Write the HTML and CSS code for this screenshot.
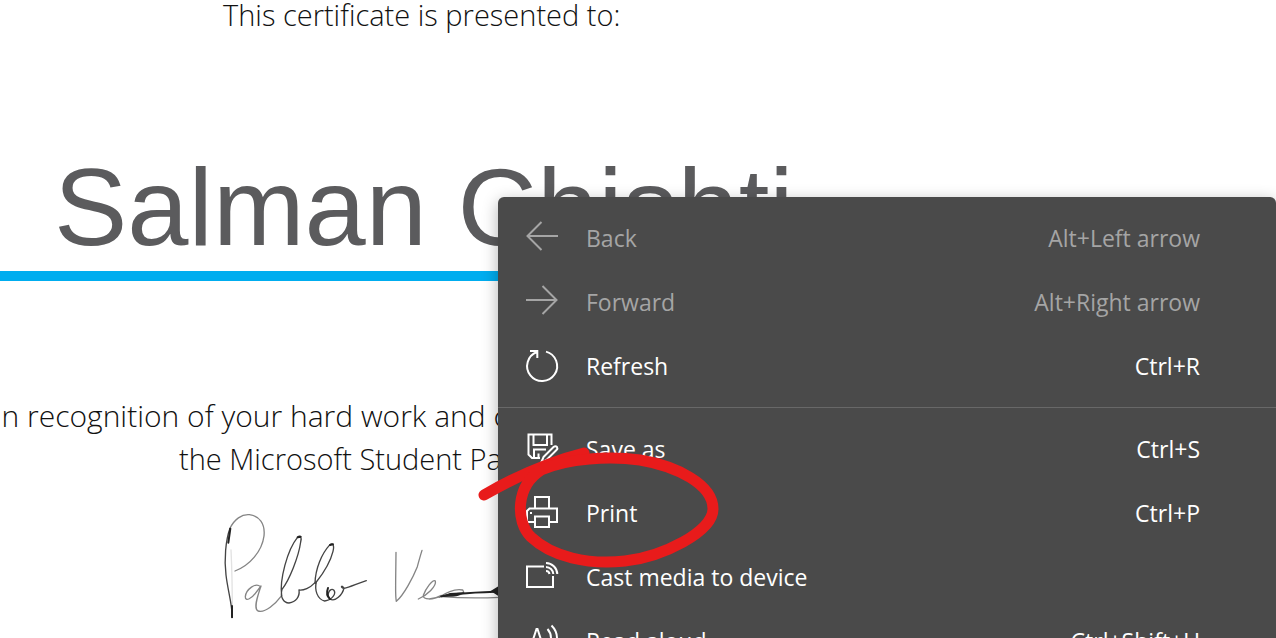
FILE: index.html
```html
<!DOCTYPE html>
<html lang="en">
<head>
<meta charset="utf-8">
<title>Certificate</title>
<link rel="stylesheet" href="styles.css">
</head>
<body>
<main class="certificate">
  <p class="intro">This certificate is presented to:</p>
  <h1 class="name">Salman Chishti</h1>
  <hr class="rule">
  <p class="reason">
    <span class="reason-line reason-first">In recognition of your hard work and contributions to</span>
    <span class="reason-line reason-second">the Microsoft Student Partners program</span>
  </p>
  <svg class="signature" width="310" height="138" viewBox="0 0 930 414" role="img" aria-label="Signature">
    <g class="ink">
      <path class="faint" d="M97 345C97 280 96 210 93 150"/>
      <path class="light" d="M90 85C103 58 125 42 148 44C178 47 196 72 192 108C186 153 151 195 105 213"/>
      <path d="M97 352C96 310 84 275 78 225C72 180 77 120 90 85"/>
      <path class="heavy" d="M91 86L85 128M96 318V352"/>
      <path class="light" d="M181 260C168 246 138 268 136 290C136 306 154 296 166 280L183 258C174 285 159 325 174 333C196 340 226 312 245 287"/>
      <path d="M245 287C238 240 262 150 292 113C300 103 306 111 302 126C296 170 268 240 246 268C240 290 250 309 267 309C288 306 300 290 297 270C310 272 330 264 345 248"/>
      <path d="M345 250C346 205 366 160 388 136C397 126 404 135 399 154C390 190 368 222 349 246C343 270 352 298 374 303C397 300 410 280 401 270C391 262 378 282 389 296C405 309 428 283 432 264C424 252 420 264 432 265C450 262 470 251 499 242"/>
      <path class="heavy" d="M293 112L302 110M390 135L399 133M384 264C378 280 382 290 390 297"/>
      <path class="light" d="M588 157L587 240C587 270 586 290 589 304C612 285 640 230 652 200Q660 170 666 151"/>
      <path class="light" d="M655 297C682 286 710 258 706 243C699 235 676 268 670 286C668 300 698 301 724 286"/>
      <path class="light" d="M717 292C750 270 770 266 788 270C800 283 770 289 725 290C790 295 850 294 900 292"/>
      <path class="heavy" d="M724 289C748 281 800 278 885 275"/>
      <path class="blot" d="M717 292L750 279L795 277L772 288ZM872 273L895 259V288Z"/>
    </g>
  </svg>
</main>

<div class="menu" role="menu" aria-label="Page menu">
  <button class="item" role="menuitem" disabled>
    <svg class="icon" viewBox="0 0 32 32" aria-hidden="true"><path d="M32 15H1M15.500 1L1.500 15L15.500 29"/></svg>
    <span class="label">Back</span><span class="keys">Alt+Left arrow</span>
  </button>
  <button class="item" role="menuitem" disabled>
    <svg class="icon" viewBox="0 0 32 32" aria-hidden="true"><path d="M0 15H31M16.500 1L30.500 15L16.500 29"/></svg>
    <span class="label">Forward</span><span class="keys">Alt+Right arrow</span>
  </button>
  <button class="item" role="menuitem">
    <svg class="icon" viewBox="0 0 32 32" aria-hidden="true"><path d="M20 2.600A15 15 0 1 1 11 3M4 2H11.300V9"/></svg>
    <span class="label">Refresh</span><span class="keys">Ctrl+R</span>
  </button>
  <hr class="separator">
  <button class="item" role="menuitem">
    <svg class="icon" viewBox="0 0 32 32" aria-hidden="true"><path d="M14 26H6L2.500 22.500V2.500H25.500V13M7.500 2.500V13H21V2.500M8 26V17.500H20M12.500 21.500V26M17.500 25L27.500 15Q29.500 13.500 31 15Q32 16.500 30.500 18L20.500 28L15 31Z"/></svg>
    <span class="label">Save as</span><span class="keys">Ctrl+S</span>
  </button>
  <button class="item" role="menuitem">
    <svg class="icon" viewBox="0 0 32 32" aria-hidden="true"><path d="M9 12V1H23V12M9 26H1V15L3.500 12.500H31V26H23M9 20.500H23V31H9Z"/><path class="dot" d="M4 16h2v2h-2z"/></svg>
    <span class="label">Print</span><span class="keys">Ctrl+P</span>
  </button>
  <button class="item" role="menuitem">
    <svg class="icon" viewBox="0 0 32 32" aria-hidden="true"><path d="M18 6.500H1V27H27V16M20 3A11.500 11.500 0 0 1 31.300 14M20 7A7.500 7.500 0 0 1 27.300 14M20 11A3.500 3.500 0 0 1 23.500 14"/></svg>
    <span class="label">Cast media to device</span>
  </button>
  <button class="item" role="menuitem">
    <svg class="icon" viewBox="0 0 32 32" aria-hidden="true"><path d="M3 28L10.500 5H11.500L19 28M6 20H16M25.500 1.500Q31 7 31 14Q31 20 27 25M21.500 5Q25 9 25 14Q25 18 22.500 21"/></svg>
    <span class="label">Read aloud</span><span class="keys">Ctrl+Shift+U</span>
  </button>
</div>

<svg class="annotation" width="250" height="130" viewBox="475 445 250 130" aria-hidden="true">
  <path d="M484 495C510 480 548 462 584 453"/>
  <path d="M541 470C516 486 515 521 531 537C552 557 588 565 625 561C662 557 713 532 713 509C713 484 676 466 640 460C610 456 568 458 541 470Z"/>
</svg>
</body>
</html>
```
FILE: styles.css
```css
* {
  box-sizing: border-box;
}

body {
  margin: 0;
  height: 100vh;
  overflow: hidden;
  position: relative;
  background: #fff;
  font-family: "Open Sans", "Noto Sans", sans-serif;
}

.certificate {
  color: #111;
}

.intro,
.reason {
  margin: 0;
  font-size: 29px;
  font-weight: 300;
  line-height: 43px;
  white-space: nowrap;
}

.intro {
  padding-left: 223px;
  margin-top: -7px;
}

.name {
  margin: 107px 0 0;
  padding-left: 54px;
  font-family: "Liberation Sans", Arial, sans-serif;
  font-size: 110px;
  font-weight: 400;
  line-height: 127px;
  color: #5b5b5d;
  white-space: nowrap;
}

.rule {
  margin: 1px 0 0;
  height: 10px;
  border: 0;
  background: #00adef;
}

.reason {
  margin-top: 113px;
}

.reason-line {
  display: block;
}

.reason-first {
  margin-left: -6px;
  font-size: 30px;
}

.reason-second {
  margin-left: 179px;
}

.signature {
  display: block;
  margin: 20px 0 0 200px;
}

.ink path {
  fill: none;
  stroke: #444;
  stroke-width: 4;
  stroke-linecap: round;
  stroke-linejoin: round;
}

.ink .light {
  stroke: #858585;
}

.ink .faint {
  stroke: #e2e2e2;
}

.ink .heavy {
  stroke: #222;
  stroke-width: 6;
}

.ink .blot {
  fill: #222;
  stroke: none;
}

.menu {
  position: absolute;
  top: 197px;
  left: 498px;
  right: 0;
  padding: 10px 0;
  border-radius: 6px;
  background: #4a4a4a;
  box-shadow: 0 4px 16px rgba(0, 0, 0, 0.3);
}

.item {
  display: flex;
  align-items: center;
  gap: 28px;
  width: 100%;
  height: 64px;
  padding: 0 76px 2px 28px;
  border: 0;
  background: none;
  color: #fff;
  font: inherit;
  font-size: 23px;
  line-height: 32px;
  text-align: left;
}

.item:disabled {
  color: #a5a5a5;
}

.icon {
  flex: none;
  width: 32px;
  height: 32px;
  margin-bottom: 2px;
  overflow: visible;
  fill: none;
  stroke: currentColor;
  stroke-width: 2;
}

.icon .dot {
  fill: currentColor;
  stroke: none;
}

.label {
  flex: 1;
}

.separator {
  margin: 8px 0 10px;
  height: 1px;
  border: 0;
  background: #686868;
}

.annotation {
  position: absolute;
  top: 445px;
  left: 475px;
  fill: none;
  stroke: #e81b1b;
  stroke-width: 11;
  stroke-linecap: round;
  pointer-events: none;
}
```
